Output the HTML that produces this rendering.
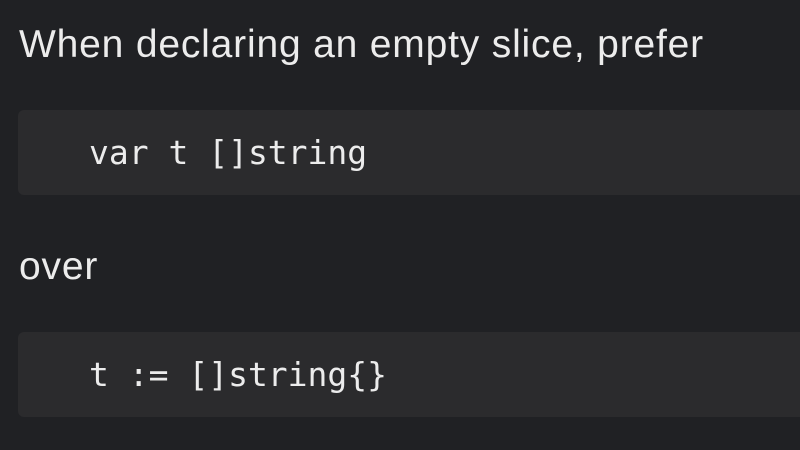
<!DOCTYPE html>
<html><head><style>
body{margin:0;width:800px;height:450px;background:#202124;overflow:hidden;position:relative;font-family:"Liberation Sans",sans-serif;color:#ececec}
.t{position:absolute;left:19px;font-size:39px;line-height:44px;letter-spacing:0.82px;white-space:nowrap}
.c{position:absolute;left:18px;width:800px;height:85px;background:#2b2b2d;border-radius:6px}
.m{position:absolute;left:89px;font-family:"DejaVu Sans Mono",monospace;font-size:33px;line-height:40px;white-space:nowrap;color:#ececec}
</style></head><body>
<div class="t" style="top:23px">When declaring an empty slice, prefer</div>
<div class="c" style="top:110px"></div>
<div class="m" style="top:133px">var t []string</div>
<div class="t" style="top:245px">over</div>
<div class="c" style="top:332px"></div>
<div class="m" style="top:355px">t := []string{}</div>
</body></html>
